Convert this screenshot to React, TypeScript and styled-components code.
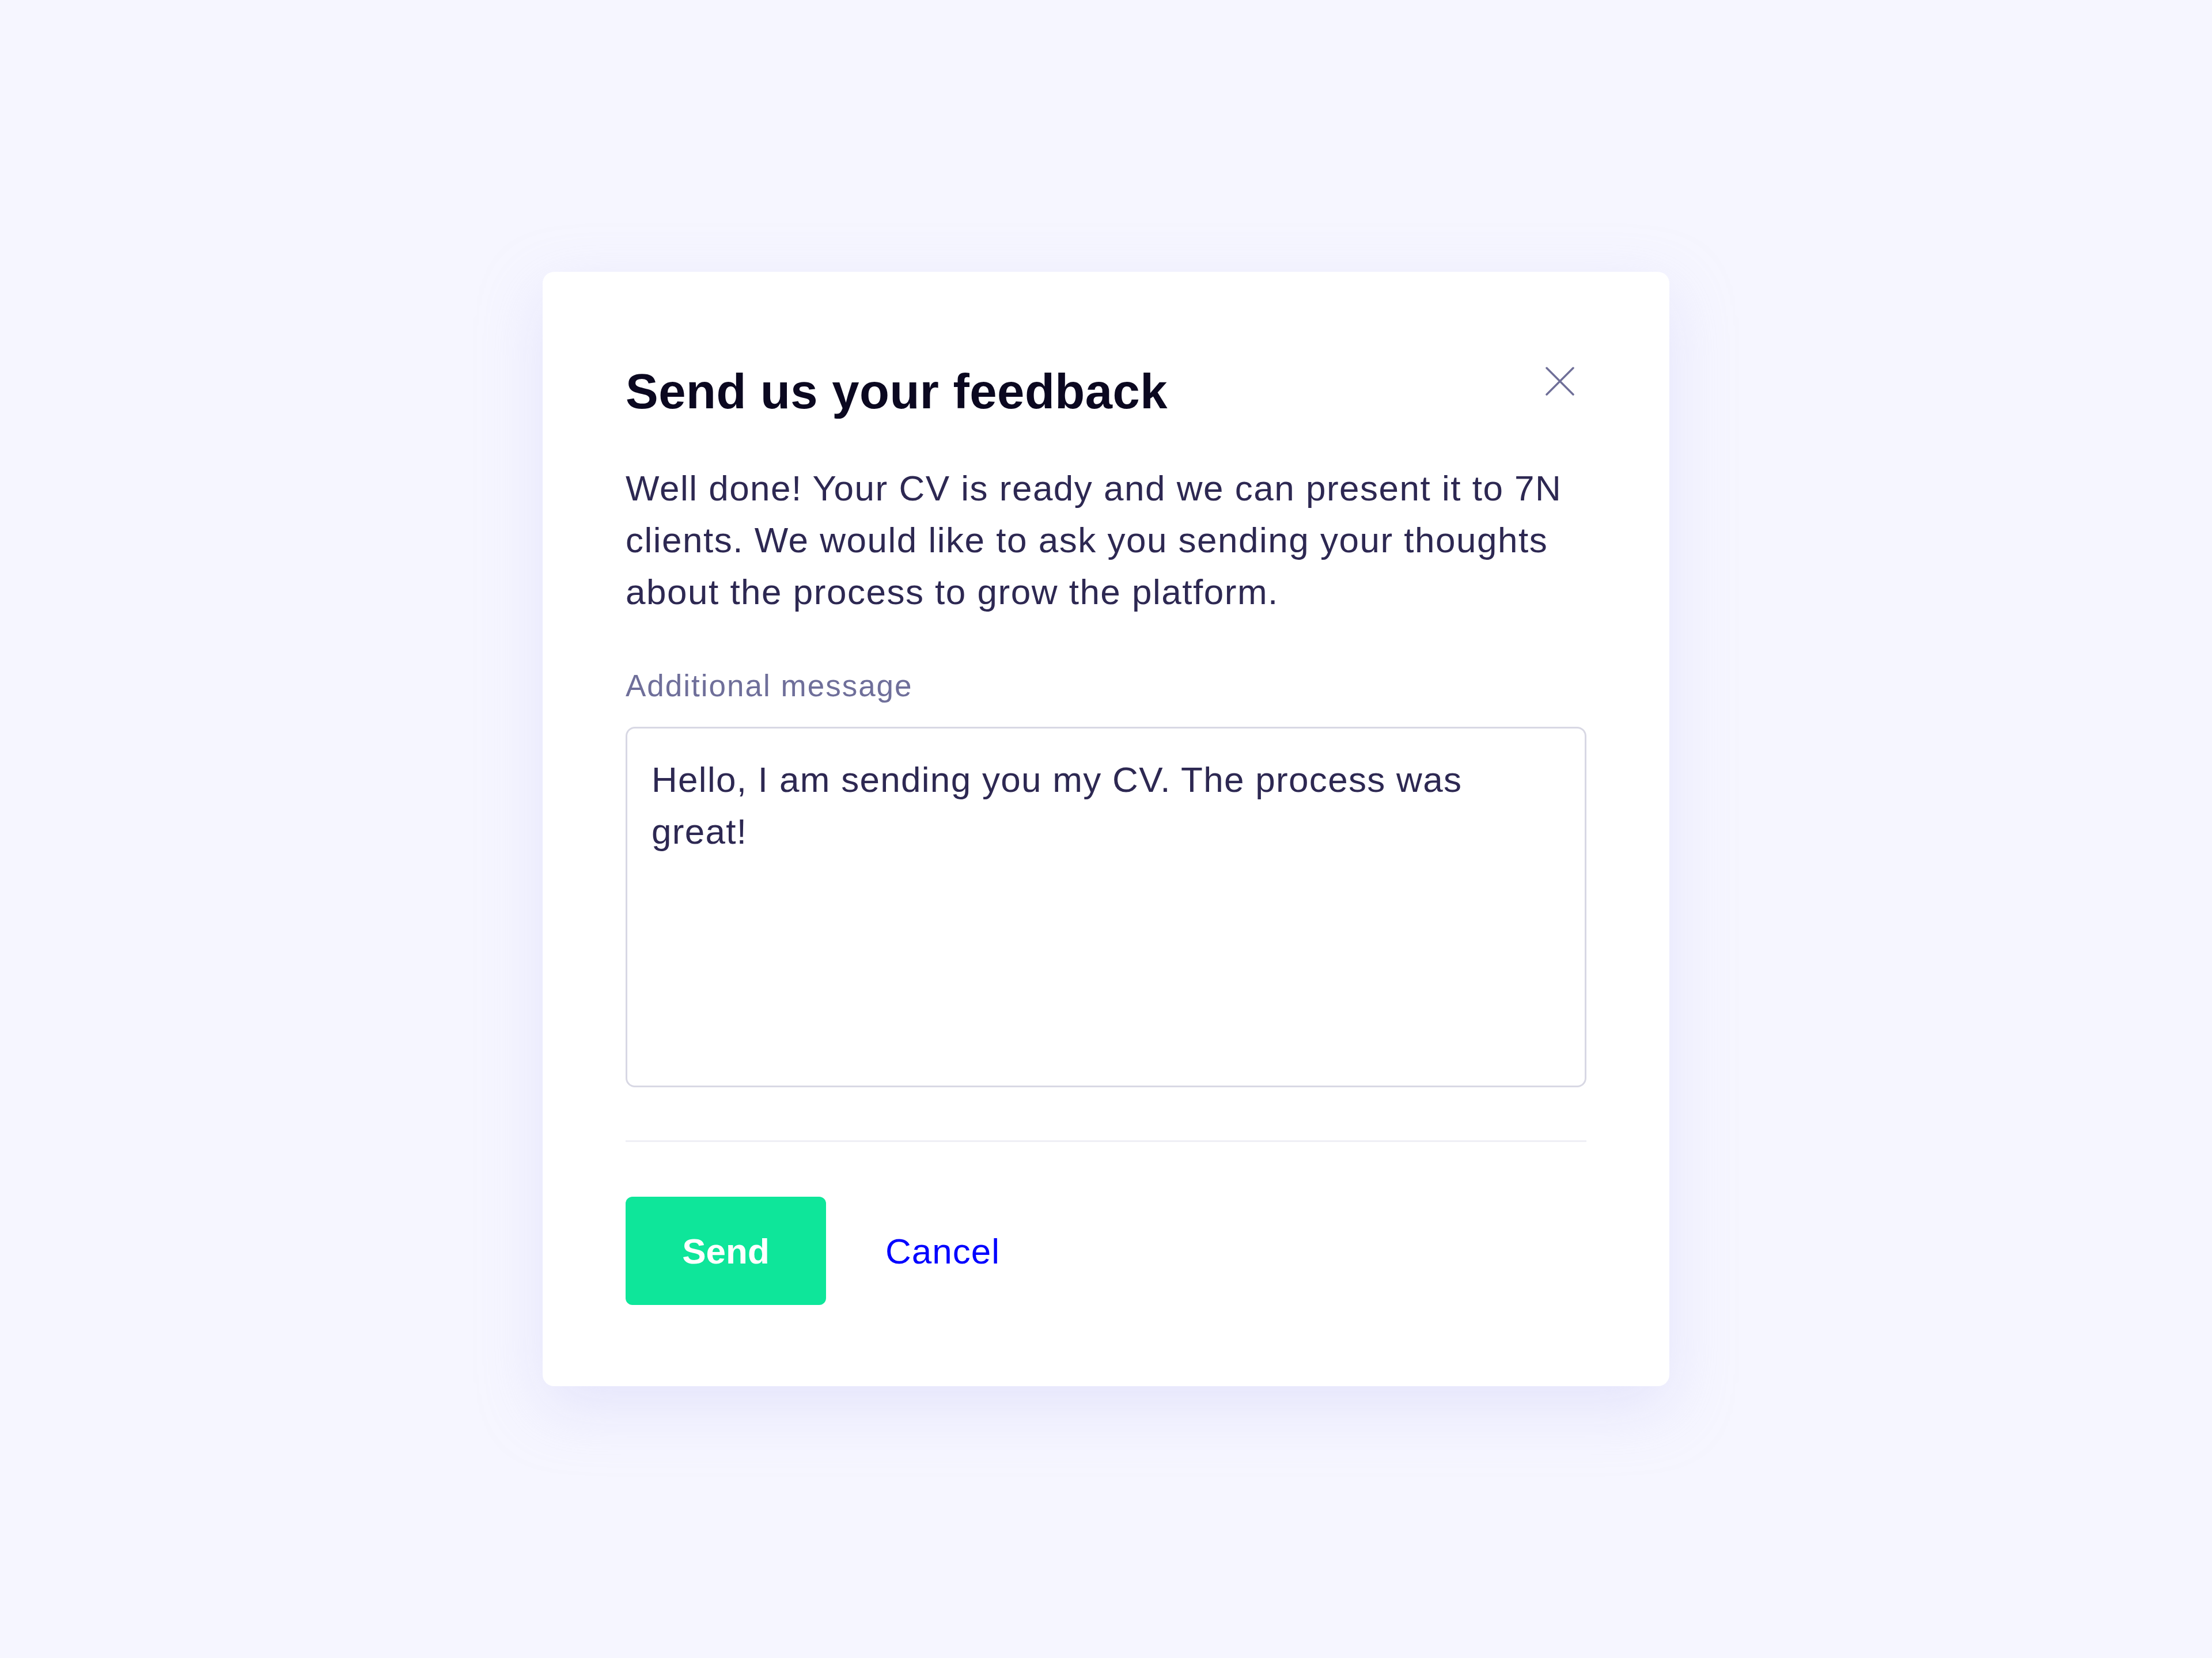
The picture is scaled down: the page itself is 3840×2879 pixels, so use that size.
import React from 'react';
import styled, { createGlobalStyle } from 'styled-components';

const GlobalStyle = createGlobalStyle`
  html, body {
    margin: 0;
    padding: 0;
    background: #f6f6ff;
  }
  * {
    box-sizing: border-box;
  }
`;

const Page = styled.div`
  min-height: 100vh;
  display: flex;
  align-items: center;
  justify-content: center;
  background: #f6f6ff;
  font-family: 'Liberation Sans', Arial, sans-serif;
`;

const Card = styled.div`
  width: 1956px;
  padding: 165px 144px 141px;
  background: #ffffff;
  border-radius: 20px;
  box-shadow: 0 36px 110px rgba(196, 196, 244, 0.35);
  display: flex;
  flex-direction: column;
`;

const Header = styled.div`
  display: flex;
  justify-content: space-between;
  align-items: flex-start;
`;

const Title = styled.h1`
  margin: 0;
  font-size: 85px;
  line-height: 85px;
  font-weight: 700;
  letter-spacing: 0.5px;
  color: #0b0820;
`;

const CloseButton = styled.button`
  width: 50px;
  height: 50px;
  margin: 0 21px 0 0;
  padding: 0;
  border: none;
  background: none;
  cursor: pointer;
  display: flex;

  svg {
    display: block;
  }
`;

const Intro = styled.p`
  margin: 81px 0 0;
  font-size: 62px;
  line-height: 90px;
  letter-spacing: 1.5px;
  color: #2d2852;
`;

const Label = styled.label`
  margin-top: 86px;
  font-size: 53px;
  line-height: 64px;
  letter-spacing: 2px;
  color: #6f6f9a;
`;

const MessageInput = styled.textarea`
  margin-top: 39px;
  width: 100%;
  height: 626px;
  padding: 44px 60px 44px 42px;
  border: 3px solid #d8d8e4;
  border-radius: 16px;
  resize: none;
  outline: none;
  font-family: 'Liberation Sans', Arial, sans-serif;
  font-size: 62px;
  line-height: 90px;
  letter-spacing: 1.3px;
  color: #2d2852;
  background: #ffffff;
`;

const Divider = styled.hr`
  margin: 92px 0 0;
  height: 3px;
  border: none;
  background: #efeff5;
`;

const Actions = styled.div`
  margin-top: 95px;
  display: flex;
  align-items: center;
  gap: 103px;
`;

const SendButton = styled.button`
  width: 348px;
  height: 188px;
  border: none;
  border-radius: 12px;
  background: #0ee69a;
  color: #ffffff;
  font-family: 'Liberation Sans', Arial, sans-serif;
  font-size: 62px;
  font-weight: 700;
  cursor: pointer;
`;

const CancelLink = styled.a`
  font-size: 62px;
  letter-spacing: 1px;
  color: #0000ff;
  text-decoration: none;
  cursor: pointer;
`;

const CloseIcon = () => (
  <svg width="50" height="50" viewBox="0 0 50 50" fill="none">
    <path
      d="M2 2 L48 48 M48 2 L2 48"
      stroke="#6f6f98"
      strokeWidth="3.5"
      strokeLinecap="round"
    />
  </svg>
);

export default function App() {
  return (
    <>
      <GlobalStyle />
      <Page>
        <Card>
          <Header>
            <Title>Send us your feedback</Title>
            <CloseButton aria-label="Close">
              <CloseIcon />
            </CloseButton>
          </Header>
          <Intro>
            Well done! Your CV is ready and we can present it to 7N clients. We
            would like to ask you sending your thoughts about the process to
            grow the platform.
          </Intro>
          <Label htmlFor="message">Additional message</Label>
          <MessageInput
            id="message"
            defaultValue="Hello, I am sending you my CV. The process was great!"
          />
          <Divider />
          <Actions>
            <SendButton>Send</SendButton>
            <CancelLink>Cancel</CancelLink>
          </Actions>
        </Card>
      </Page>
    </>
  );
}
